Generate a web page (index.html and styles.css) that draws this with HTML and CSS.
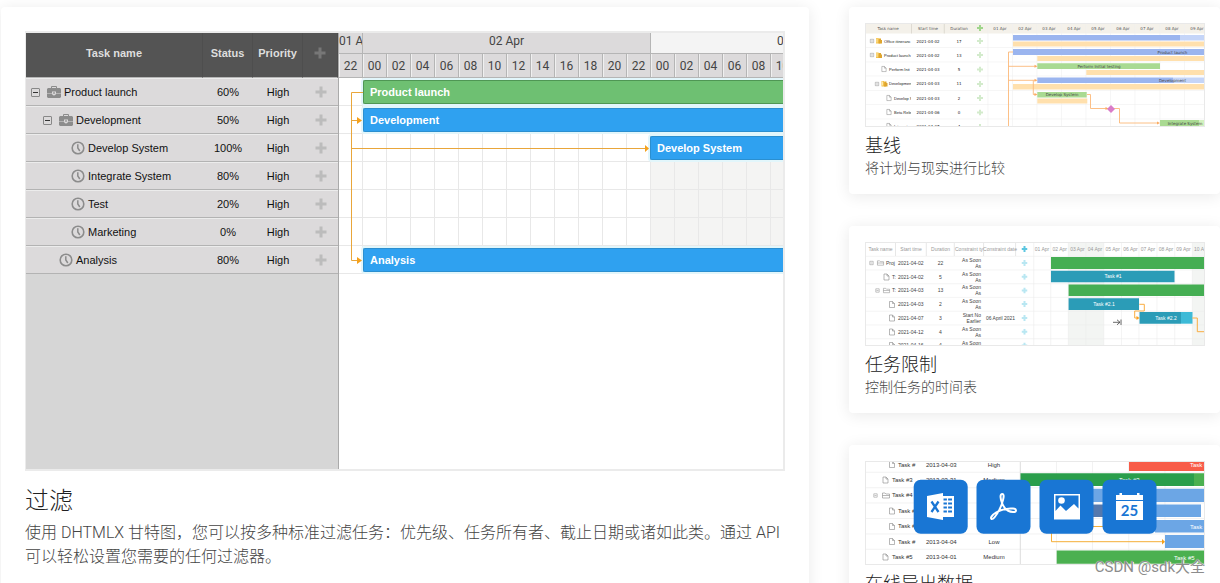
FILE: index.html
```html
<!DOCTYPE html>
<html lang="zh-CN">
<head>
<meta charset="utf-8">
<title>DHTMLX 甘特图</title>
<link rel="stylesheet" href="styles.css">
</head>
<body>
<svg class="sprite" aria-hidden="true">
  <symbol id="case" viewBox="0 0 14 12"><path fill="none" stroke="#8c8c8c" d="M4.500 3V.5h5V3"/><path fill="#8c8c8c" d="M1 2h12l1 1v4H9V5.500H5V7H0V3zM0 7.500h5c.3 2.600 3.700 2.600 4 0h5V11l-1 1H1l-1-1z"/><path fill="#8c8c8c" d="M6.200 6.300h1.600v1.500H6.200z"/></symbol>
  <symbol id="clock" viewBox="0 0 14 14"><circle cx="7" cy="7" r="5.8" fill="none" stroke="#8c8c8c" stroke-width="1.6"/><path d="M6.800 3.2V7l2 3" fill="none" stroke="#8c8c8c" stroke-width="1.5"/></symbol>
  <symbol id="plus" viewBox="0 0 12 12"><path fill="currentColor" d="M4.500 .5h3v4h4v3h-4v4h-3v-4h-4v-3h4z"/></symbol>
  <symbol id="page" viewBox="0 0 6 7" overflow="visible"><path d="M.5.5h3l2 2v4h-5zM3.500.5v2h2" fill="#fff" stroke="#888" stroke-width=".6"/></symbol>
  <symbol id="folder" viewBox="0 0 8 6" overflow="visible"><path d="M.5 5.500V.5h2.500l1 1h3.500v4zM.5 3h7" fill="#fff" stroke="#888" stroke-width=".6"/></symbol>
  <symbol id="gold" viewBox="0 0 6 6" overflow="visible"><path d="M0 .5h2.500l.5 1h1.500V6H0z" fill="#f5c24b"/><path d="M3 1h2v1.500h1V6H2.500z" fill="#dfa52f"/><path d="M1 1v4" stroke="#fff3c4" stroke-width=".8"/></symbol>
  <symbol id="box" viewBox="0 0 4 4" overflow="visible"><path d="M.3.3h3.400v3.400H.3zM1 2h2" fill="none" stroke="#888" stroke-width=".5"/></symbol>
  <symbol id="add" viewBox="0 0 6 6"><path d="M3 0v6M0 3h6" stroke="currentColor" stroke-width="2"/></symbol>
</svg>

<main class="page">
  <article class="card feature">
    <div class="gantt">
      <table class="tasks">
        <colgroup><col><col class="col-value"><col class="col-value"><col class="col-add"></colgroup>
        <thead>
          <tr><th>Task name</th><th>Status</th><th>Priority</th><th><button class="add" aria-label="Add task"><svg><use href="#plus"/></svg></button></th></tr>
        </thead>
        <tbody>
          <tr><td><div class="name"><button class="toggle" aria-label="Collapse"></button><svg class="case"><use href="#case"/></svg>Product launch</div></td><td>60%</td><td>High</td><td><button class="add" aria-label="Add"><svg><use href="#plus"/></svg></button></td></tr>
          <tr><td><div class="name level-1"><button class="toggle" aria-label="Collapse"></button><svg class="case"><use href="#case"/></svg>Development</div></td><td>50%</td><td>High</td><td><button class="add" aria-label="Add"><svg><use href="#plus"/></svg></button></td></tr>
          <tr><td><div class="name level-2"><span class="blank"></span><svg class="clock"><use href="#clock"/></svg>Develop System</div></td><td>100%</td><td>High</td><td><button class="add" aria-label="Add"><svg><use href="#plus"/></svg></button></td></tr>
          <tr><td><div class="name level-2"><span class="blank"></span><svg class="clock"><use href="#clock"/></svg>Integrate System</div></td><td>80%</td><td>High</td><td><button class="add" aria-label="Add"><svg><use href="#plus"/></svg></button></td></tr>
          <tr><td><div class="name level-2"><span class="blank"></span><svg class="clock"><use href="#clock"/></svg>Test</div></td><td>20%</td><td>High</td><td><button class="add" aria-label="Add"><svg><use href="#plus"/></svg></button></td></tr>
          <tr><td><div class="name level-2"><span class="blank"></span><svg class="clock"><use href="#clock"/></svg>Marketing</div></td><td>0%</td><td>High</td><td><button class="add" aria-label="Add"><svg><use href="#plus"/></svg></button></td></tr>
          <tr><td><div class="name level-1"><span class="blank"></span><svg class="clock"><use href="#clock"/></svg>Analysis</div></td><td>80%</td><td>High</td><td><button class="add" aria-label="Add"><svg><use href="#plus"/></svg></button></td></tr>
        </tbody>
      </table>
      <div class="timeline">
        <div class="days"><span class="day short">01 A</span><span class="day">02 Apr</span><span class="day weekend">03 Apr</span></div>
        <div class="hours"><span>22</span><span>00</span><span>02</span><span>04</span><span>06</span><span>08</span><span>10</span><span>12</span><span>14</span><span>16</span><span>18</span><span>20</span><span>22</span><span>00</span><span>02</span><span>04</span><span>06</span><span>08</span><span>10</span></div>
        <div class="rows">
          <div class="row"><div class="bar project">Product launch</div></div>
          <div class="row"><div class="bar">Development</div></div>
          <div class="row"><div class="bar later">Develop System</div></div>
          <div class="row"></div>
          <div class="row"></div>
          <div class="row"></div>
          <div class="row"><div class="bar">Analysis</div></div>
          <svg class="links" width="320" height="196" viewBox="0 0 320 196"><g fill="none" stroke="#e9a63a"><path d="M24 14.500H12.500V182.500H20M12.500 42.500H20M12.500 70.500H307"/></g><path fill="#f5a11c" d="M18 39l5 3.500-5 3.500zM18 179l5 3.500-5 3.500zM306 67l4 3.500-4 3.500z"/></svg>
        </div>
      </div>
    </div>
    <h2 class="feature-title">过滤</h2>
    <p class="feature-text">使用 DHTMLX 甘特图，您可以按多种标准过滤任务：优先级、任务所有者、截止日期或诸如此类。通过 API 可以轻松设置您需要的任何过滤器。</p>
  </article>

  <aside class="side">
    <article class="card item">
      <svg class="thumb thumb-verdana" viewBox="0 0 340 104">
        <rect width="340" height="104" fill="#fff"/>
        <rect width="340" height="10.500" fill="#f4f1ea"/>
        <path d="M0 24.500H340M0 39H340M0 53H340M0 67.500H340M0 81.500H340M0 96H340M123 0V104M147.500 0V104M172 0V104M196.500 0V104M221 0V104M245.500 0V104M270 0V104M295 0V104M319.500 0V104" stroke="#f0f0f0" stroke-width=".6"/>
        <path d="M46.500 0V10.500M79.300 0V10.500" stroke="#d8d4cc" stroke-width=".8"/>
        <g fill="#555" text-anchor="middle"><text x="23" y="6.500">Task name</text><text x="63" y="6.500">Start time</text><text x="94" y="6.500">Duration</text><text x="135" y="6.500">01 Apr</text><text x="160" y="6.500">02 Apr</text><text x="184" y="6.500">03 Apr</text><text x="209" y="6.500">04 Apr</text><text x="233" y="6.500">05 Apr</text><text x="258" y="6.500">06 Apr</text><text x="282" y="6.500">07 Apr</text><text x="307" y="6.500">08 Apr</text><text x="332" y="6.500">09 Apr</text></g>
        <svg class="thumb-names" width="46" height="104" fill="#222">
          <use href="#box" x="5" y="16" width="4" height="4"/><use href="#gold" x="11" y="14.500" width="6" height="6"/><text x="19" y="19.500">Office itineranc</text>
          <use href="#box" x="5" y="30" width="4" height="4"/><use href="#gold" x="11" y="29" width="6" height="6"/><text x="19" y="33.500">Product launch</text>
          <use href="#page" x="16" y="43" width="6" height="6"/><text x="24" y="48">Perform Init</text>
          <use href="#box" x="10" y="59" width="4" height="4"/><use href="#gold" x="16.500" y="57.500" width="6" height="6"/><text x="24" y="62">Developmen</text>
          <use href="#page" x="21" y="72" width="6" height="6"/><text x="29" y="76.500">Develop S</text>
          <use href="#page" x="21" y="86" width="6" height="6"/><text x="29" y="90.500">Beta Rele</text>
          <use href="#page" x="21" y="100" width="6" height="6"/><text x="29" y="105">Integrate</text>
        </svg>
        <g fill="#222" text-anchor="middle"><text x="63" y="19.500">2021-04-02</text><text x="63" y="33.500">2021-04-02</text><text x="63" y="48">2021-04-03</text><text x="63" y="62">2021-04-03</text><text x="63" y="76.500">2021-04-03</text><text x="63" y="90.500">2021-04-06</text><text x="63" y="105">2021-04-07</text><text x="94" y="19.500">17</text><text x="94" y="33.500">13</text><text x="94" y="48">5</text><text x="94" y="62">11</text><text x="94" y="76.500">2</text><text x="94" y="90.500">0</text><text x="94" y="105">4</text></g>
        <g color="#9fd58b"><use href="#add" x="112" y="2" width="6" height="6"/></g>
        <g color="#d3ebcc"><use href="#add" x="112" y="15" width="6" height="6"/><use href="#add" x="112" y="29" width="6" height="6"/><use href="#add" x="112" y="43.500" width="6" height="6"/><use href="#add" x="112" y="58" width="6" height="6"/><use href="#add" x="112" y="72" width="6" height="6"/><use href="#add" x="112" y="86.500" width="6" height="6"/><use href="#add" x="112" y="101" width="6" height="6"/></g>
        <path fill="#c5d5f8" d="M315 12h25v5.500h-25zM308 54.500h32v5.500h-32z"/>
        <path fill="#9bb5ef" d="M148 12h167v5.500H148zM148 26h192v6H148zM172.300 54.500H308v5.500H172.300z"/>
        <path fill="#ffe0ad" d="M148 18.500h192v5H148zM172.300 33h168v5h-168zM221.300 47h119v5h-119zM148 61h192v5.500H148zM172.300 75.500h50v5h-50z"/>
        <path fill="#a9da92" d="M172.300 40.200H295v5.800H172.300zM172.300 69h49.400v5.500h-49.400zM295 97h39v6h-39z"/>
        <path fill="#d3f2bf" d="M334 97h6v6h-6z"/>
        <g fill="none" stroke="#fcb979" stroke-width=".9"><path d="M148 29h-4.500v75M143.500 43.300H170M143.500 57.300H170M168.300 57.300V71.500H170M222 71.500h3.500v14H242M249 85.500h5.500V100H293"/></g>
        <path fill="#fbab62" d="M169.500 41.800l3 1.500-3 1.500zM169.500 55.800l3 1.500-3 1.500zM169.500 70l3 1.500-3 1.500zM240.500 84l3 1.500-3 1.500zM292 98.500l3 1.500-3 1.500z"/>
        <path fill="#d97cc9" d="M246 82l4 4-4 4-4-4z"/>
        <g fill="#444" text-anchor="middle"><text x="307.500" y="30.500">Product launch</text><text x="234" y="44.500">Perform Initial testing</text><text x="307.500" y="58.800">Development</text><text x="197" y="73.200">Develop System</text><text x="320" y="101.500">Integrate System</text></g>
        <rect x=".5" y=".5" width="339" height="103" fill="none" stroke="#e9e9e9"/>
      </svg>
      <h3 class="item-title">基线</h3>
      <p class="item-text">将计划与现实进行比较</p>
    </article>

    <article class="card item">
      <svg class="thumb" viewBox="0 0 340 104">
        <rect width="340" height="104" fill="#fff"/>
        <path fill="#f3f5f3" d="M203.300 0h35.400v104h-35.400zM327.300 0H340v104h-12.700z"/>
        <path d="M0 14.300H340M0 28H340M0 41.700H340M0 55.400H340M0 69.200H340M0 83H340M0 96.700H340M168.700 0V104M185.700 0V104M203.300 0V104M221 0V104M238.700 0V104M256.500 0V104M274 0V104M292 0V104M309.700 0V104M327.300 0V104" stroke="#ececec" stroke-width=".6"/>
        <path d="M30.500 0V14M61.300 0V14M89.300 0V14M118.600 0V14M150.600 0V14" stroke="#ddd" stroke-width=".7"/>
        <g fill="#999" text-anchor="middle"><text x="15.500" y="8.800">Task name</text><text x="46" y="8.800">Start time</text><text x="75.500" y="8.800">Duration</text><text x="90" y="8.800" text-anchor="start">Constraint ty</text><text x="135" y="8.800">Constraint date</text><text x="177" y="8.800">01 Apr</text><text x="194.700" y="8.800">02 Apr</text><text x="212.400" y="8.800">03 Apr</text><text x="230" y="8.800">04 Apr</text><text x="247.800" y="8.800">05 Apr</text><text x="265.500" y="8.800">06 Apr</text><text x="283" y="8.800">07 Apr</text><text x="301" y="8.800">08 Apr</text><text x="318.500" y="8.800">09 Apr</text><text x="329" y="8.800" text-anchor="start">10 A</text></g>
        <g fill="#444">
          <use href="#box" x="4.500" y="19" width="4" height="4"/><use href="#folder" x="12" y="18" width="7" height="6"/><text x="21" y="22.800">Proj</text>
          <use href="#page" x="18.500" y="31.500" width="6" height="7"/><text x="27" y="36.500">T:</text>
          <use href="#box" x="10.500" y="46.500" width="4" height="4"/><use href="#folder" x="18" y="45.500" width="7" height="6"/><text x="27" y="50.200">T:</text>
          <use href="#page" x="24" y="59" width="6" height="7"/><use href="#page" x="24" y="72.500" width="6" height="7"/><use href="#page" x="24" y="86.500" width="6" height="7"/><use href="#page" x="24" y="100" width="6" height="7"/>
        </g>
        <g fill="#444"><text x="33" y="22.800">2021-04-02</text><text x="33" y="36.500">2021-04-02</text><text x="33" y="50.200">2021-04-03</text><text x="33" y="64">2021-04-03</text><text x="33" y="77.800">2021-04-07</text><text x="33" y="91.500">2021-04-12</text><text x="33" y="105">2021-04-16</text></g>
        <g fill="#444" text-anchor="middle"><text x="75.500" y="22.800">22</text><text x="75.500" y="36.500">5</text><text x="75.500" y="50.200">13</text><text x="75.500" y="64">2</text><text x="75.500" y="77.800">3</text><text x="75.500" y="91.500">4</text><text x="75.500" y="105">4</text><text x="135.500" y="77.800">06 April 2021</text></g>
        <g fill="#444" text-anchor="end"><text x="116" y="20">As Soon</text><text x="116" y="26">As</text><text x="116" y="33.700">As Soon</text><text x="116" y="39.700">As</text><text x="116" y="47.400">As Soon</text><text x="116" y="53.400">As</text><text x="116" y="61.200">As Soon</text><text x="116" y="67.200">As</text><text x="116" y="75">Start No</text><text x="116" y="81">Earlier</text><text x="116" y="88.700">As Soon</text><text x="116" y="94.700">As</text><text x="116" y="102.500">As Soon</text></g>
        <g color="#5cc6e0"><use href="#add" x="156.500" y="4" width="6" height="6"/></g>
        <g color="#b9e7f2"><use href="#add" x="156.500" y="18" width="6" height="6"/><use href="#add" x="156.500" y="31.700" width="6" height="6"/><use href="#add" x="156.500" y="45.400" width="6" height="6"/><use href="#add" x="156.500" y="59" width="6" height="6"/><use href="#add" x="156.500" y="73" width="6" height="6"/><use href="#add" x="156.500" y="86.700" width="6" height="6"/><use href="#add" x="156.500" y="100.500" width="6" height="6"/></g>
        <path fill="#45ae53" d="M186 15h154v12H186zM203.600 42.500H340V54H203.600z"/>
        <path fill="#2b9cb7" d="M186 28.700h123.500v11.600H186zM203.600 56.300H274V68h-70.400zM274.500 70H316v11.700h-41.500z"/>
        <path fill="#3dbad7" d="M316 70h11.500v11.700H316z"/>
        <path d="M274.300 62.300h5V69h-9.600v7h3M327.300 76h5v13.700H340" fill="none" stroke="#f9ad42"/>
        <path d="M271.500 74l3 2-3 2z" fill="#f9a01f"/>
        <path d="M248 80.300h7M252 77.800l3 2.500-3 2.500M256 77.500v5.500" fill="none" stroke="#444" stroke-width=".8"/>
        <g fill="#fff" text-anchor="middle"><text x="248" y="36.300">Task #1</text><text x="239" y="64">Task #2.1</text><text x="301" y="77.700">Task #2.2</text></g>
        <rect x=".5" y=".5" width="339" height="103" fill="none" stroke="#e9e9e9"/>
      </svg>
      <h3 class="item-title">任务限制</h3>
      <p class="item-text">控制任务的时间表</p>
    </article>

    <article class="card item">
      <svg class="thumb thumb-large" viewBox="0 0 340 104">
        <rect width="340" height="104" fill="#fff"/>
        <path d="M0 11.300H340M0 26.700H340M0 42H340M0 57.500H340M0 73H340M0 88.300H340M191.500 0V104M227.500 0V104M263.700 0V104M300 0V104" stroke="#ececec" stroke-width=".7"/>
        <path d="M155.300 0V104" stroke="#ddd"/>
        <g fill="#333"><use href="#page" x="24" y="0" width="6" height="7"/><text x="33" y="5.700">Task #</text><use href="#page" x="17.500" y="15.500" width="6" height="7"/><text x="27" y="21">Task #3</text><use href="#box" x="8.500" y="32.500" width="4" height="4"/><use href="#folder" x="17" y="31.500" width="8" height="6"/><text x="27" y="36.400">Task #4</text><use href="#page" x="24" y="46.500" width="6" height="7"/><text x="33" y="51.800">Task #</text><use href="#page" x="24" y="62" width="6" height="7"/><text x="33" y="67.300">Task #</text><use href="#page" x="24" y="77" width="6" height="7"/><text x="33" y="82.700">Task #</text><use href="#page" x="17.500" y="92.500" width="6" height="7"/><text x="27" y="98">Task #5</text></g>
        <g fill="#333" text-anchor="middle"><text x="76.300" y="5.700">2013-04-03</text><text x="76.300" y="21">2013-03-31</text><text x="76.300" y="82.700">2013-04-04</text><text x="76.300" y="98">2013-04-01</text><text x="129" y="5.700">High</text><text x="129" y="21">Medium</text><text x="129" y="82.700">Low</text><text x="129" y="98">Medium</text></g>
        <path fill="#f85c48" d="M264 1h76v9h-76z"/>
        <path fill="#4bb050" d="M329 12.300h11V25h-11zM191.700 89.500H340v13.200H191.700z"/>
        <path fill="#2a9e4b" d="M155.500 12.300H329V25H155.500z"/>
        <path fill="#6ca6e5" d="M200 27.700h140V41H200zM238 43.500h98V56h-98zM290 59h50v12.500h-50zM300 74h40v13h-40z"/>
        <path fill="#5478ad" d="M200 43.500h38V56h-38z"/>
        <path d="M228 65.500h12M186.500 72v8.700H298" fill="none" stroke="#f4ae38"/>
        <path d="M297 78l3 2.700-3 2.700z" fill="#f4a11c"/>
        <g fill="#fff"><text x="325" y="5.700">Task #</text><text x="254" y="21">Task #3</text><text x="325" y="67.700">Task #</text><text x="309" y="98.500">Task #5</text></g>
        <g fill="#1976d4"><rect x="48.700" y="18.700" width="54" height="54" rx="7"/><rect x="111.500" y="18.700" width="54" height="54" rx="7"/><rect x="174.500" y="18.700" width="54" height="54" rx="7"/><rect x="237.500" y="18.700" width="54" height="54" rx="7"/></g>
        <g transform="translate(62 32)"><path fill="#fff" d="M0 3L16 0v27L0 24zM16 3h11v21H16z"/><path d="M4.500 8.500l7 10.500M11.500 8.500l-7 10.500" stroke="#1976d4" stroke-width="2.300"/><path d="M16.500 6.500H25M16.500 10.500H25M16.500 14.500H25M16.500 18.500H25" stroke="#1976d4" stroke-width="2"/><path d="M20.500 5v16" stroke="#fff" stroke-width="1.200"/></g>
        <path transform="translate(125 32)" fill="none" stroke="#fff" stroke-width="2" stroke-linejoin="round" d="M12.500 1c-3 0-2 5-.5 9 2 5 6 9 11 9 4 0 4-3 0-3.500-6-.5-12 1-17 4-4 2.500-6 5.500-4.500 6.500 2 1 5-4 8-9.500 2.500-5 6-15.500 3-15.500z"/>
        <g transform="translate(189 33)"><path fill="#fff" fill-rule="evenodd" d="M0 0h26v25.500H0zM1.500 1.500V17l5-5.500L12 17l8-7 4.500 4.500V1.500z"/><circle cx="7.500" cy="6.500" r="3.300" fill="#fff"/></g>
        <g transform="translate(251 32)"><path fill="#fff" d="M0 2h3.500V0H6v2h15V0h2.500v2H27v5H0zM0 8h27v19H0z"/><text class="date" x="13.500" y="22.500" text-anchor="middle" fill="#1976d4">25</text></g>
        <rect x=".5" y=".5" width="339" height="103" fill="none" stroke="#e9e9e9"/>
      </svg>
      <h3 class="item-title">在线导出数据</h3>
    </article>
  </aside>
  <div class="watermark">CSDN @sdk大全</div>
</main>
</body>
</html>
```
FILE: styles.css
```css
* {
  box-sizing: border-box;
}

body {
  margin: 0;
  background: #fff;
  font-family: Roboto, "Noto Sans CJK SC", sans-serif;
  color: #212121;
}

.sprite {
  position: absolute;
  width: 0;
  height: 0;
}

.page {
  position: relative;
  display: grid;
  grid-template-columns: minmax(0, 1fr) 371px;
  gap: 40px;
  height: 100vh;
  padding: 7px 0 0 1px;
  overflow: hidden;
}

.card {
  background: #fff;
  border-radius: 4px;
  box-shadow: 0 2px 16px rgba(0, 0, 0, 0.09);
}

.feature {
  padding: 24px;
  align-self: start;
}

.side {
  display: flex;
  flex-direction: column;
  gap: 32px;
}

.item {
  padding: 16px 15px 16px 16px;
}

.feature-title,
.feature-text,
.item-title,
.item-text {
  margin: 0;
  font-weight: 300;
}

.feature-title {
  margin: 14px 0 4px;
  font-size: 24px;
  line-height: 32px;
}

.feature-text {
  font-size: 16px;
  line-height: 24px;
  color: #444;
}

.item-title {
  margin-top: 7px;
  font-size: 18px;
  line-height: 24px;
}

.item-text {
  font-size: 14px;
  line-height: 20px;
  color: #444;
}

/* Gantt chart */
.gantt {
  display: flex;
  height: 440px;
  border: 2px solid #ebebeb;
  border-left-width: 1px;
  background: #d6d6d6;
  font-family: "Liberation Sans", Arial, sans-serif;
  font-size: 11px;
}

.tasks {
  flex: none;
  align-self: flex-start;
  width: 312px;
  border-collapse: separate;
  border-spacing: 0;
  table-layout: fixed;
}

.col-value {
  width: 50px;
}

.col-add {
  width: 35px;
}

.tasks th {
  height: 45px;
  padding: 0 0 4px;
  background: #545454;
  border-right: 1px solid #4e4e4e;
  border-bottom: 1px solid #b5b5b5;
  color: #dedede;
  font-size: 11px;
}

.tasks td {
  height: 28px;
  padding: 0;
  background: #dcdadb;
  border-top: 1px solid #ececec;
  border-bottom: 1px solid #b3b3b3;
  color: #111;
  text-align: center;
}

.name {
  display: flex;
  align-items: center;
  padding-left: 5px;
}

.level-1 {
  padding-left: 17px;
}

.level-2 {
  padding-left: 29px;
}

.toggle,
.blank {
  width: 9px;
  height: 9px;
  margin-right: 7px;
}

.toggle {
  padding: 0;
  border: 1px solid #888;
  border-radius: 1px;
  background: linear-gradient(#333, #333) center / 5px 1px no-repeat;
}

.case,
.clock {
  width: 14px;
  height: 14px;
  margin-right: 3px;
}

.add {
  display: block;
  width: 12px;
  height: 12px;
  margin: 0 auto;
  padding: 0;
  border: 0;
  background: none;
  color: #bcbcbc;
}

.tasks th .add {
  color: #777;
}

.add svg {
  display: block;
  width: 12px;
  height: 12px;
}

.timeline {
  flex: 1;
  min-width: 0;
  overflow: hidden;
  border-left: 1px solid #aaa;
  background: #fff;
}

.days,
.hours {
  display: flex;
  font-family: Roboto, sans-serif;
  font-size: 12px;
  color: #444;
}

.day {
  flex: none;
  width: 288px;
  height: 21px;
  border-right: 1px solid #b5b5b5;
  border-bottom: 1px solid #b5b5b5;
  background: #dcdadb;
  line-height: 17px;
  text-align: center;
}

.short {
  width: 24px;
  white-space: nowrap;
  overflow: hidden;
}

.weekend {
  background: #f4f4f4;
}

.hours span {
  flex: none;
  width: 24px;
  height: 24px;
  border-right: 1px solid #b5b5b5;
  border-bottom: 1px solid #b5b5b5;
  background: #dcdadb;
  box-shadow: inset 1px 0 #f0f0f0;
  line-height: 24px;
  text-align: center;
}

.rows {
  position: relative;
  background:
    repeating-linear-gradient(90deg, transparent 0 23px, #e8e8e8 23px 24px),
    linear-gradient(90deg, transparent 311px, #f4f4f3 311px);
}

.row {
  height: 28px;
  padding-top: 2px;
  border-bottom: 1px solid #e8e8e8;
}

.bar {
  height: 24px;
  margin-left: 24px;
  padding-left: 6px;
  border: 1px solid #2b8fd0;
  border-right: 0;
  border-radius: 2px 0 0 2px;
  background: #2fa1f0;
  box-shadow: 0 0 0 2px #e2f6fb;
  color: #fff;
  font-weight: 700;
  line-height: 23px;
}

.project {
  border-color: #4f9654;
  background: #6ec072;
}

.later {
  margin-left: 311px;
}

.links {
  position: absolute;
  top: 0;
  left: 0;
}

/* Preview pictures */
.thumb {
  display: block;
  width: 100%;
  height: auto;
  font-family: "Liberation Sans", Arial, sans-serif;
  font-size: 5px;
}

.thumb-verdana {
  font-family: "DejaVu Sans", Verdana, sans-serif;
  font-size: 4px;
}

.thumb-names {
  font-family: "Liberation Sans", Arial, sans-serif;
}

.thumb-large {
  font-size: 6px;
}

.date {
  font-family: Lato, sans-serif;
  font-size: 15px;
  font-weight: 700;
}

.watermark {
  position: absolute;
  right: 15px;
  bottom: 6px;
  font-size: 15px;
  line-height: 20px;
  color: #8c8c8c;
  text-shadow: 0 0 1px #fff, 1px 1px 0 #fff;
}
```
